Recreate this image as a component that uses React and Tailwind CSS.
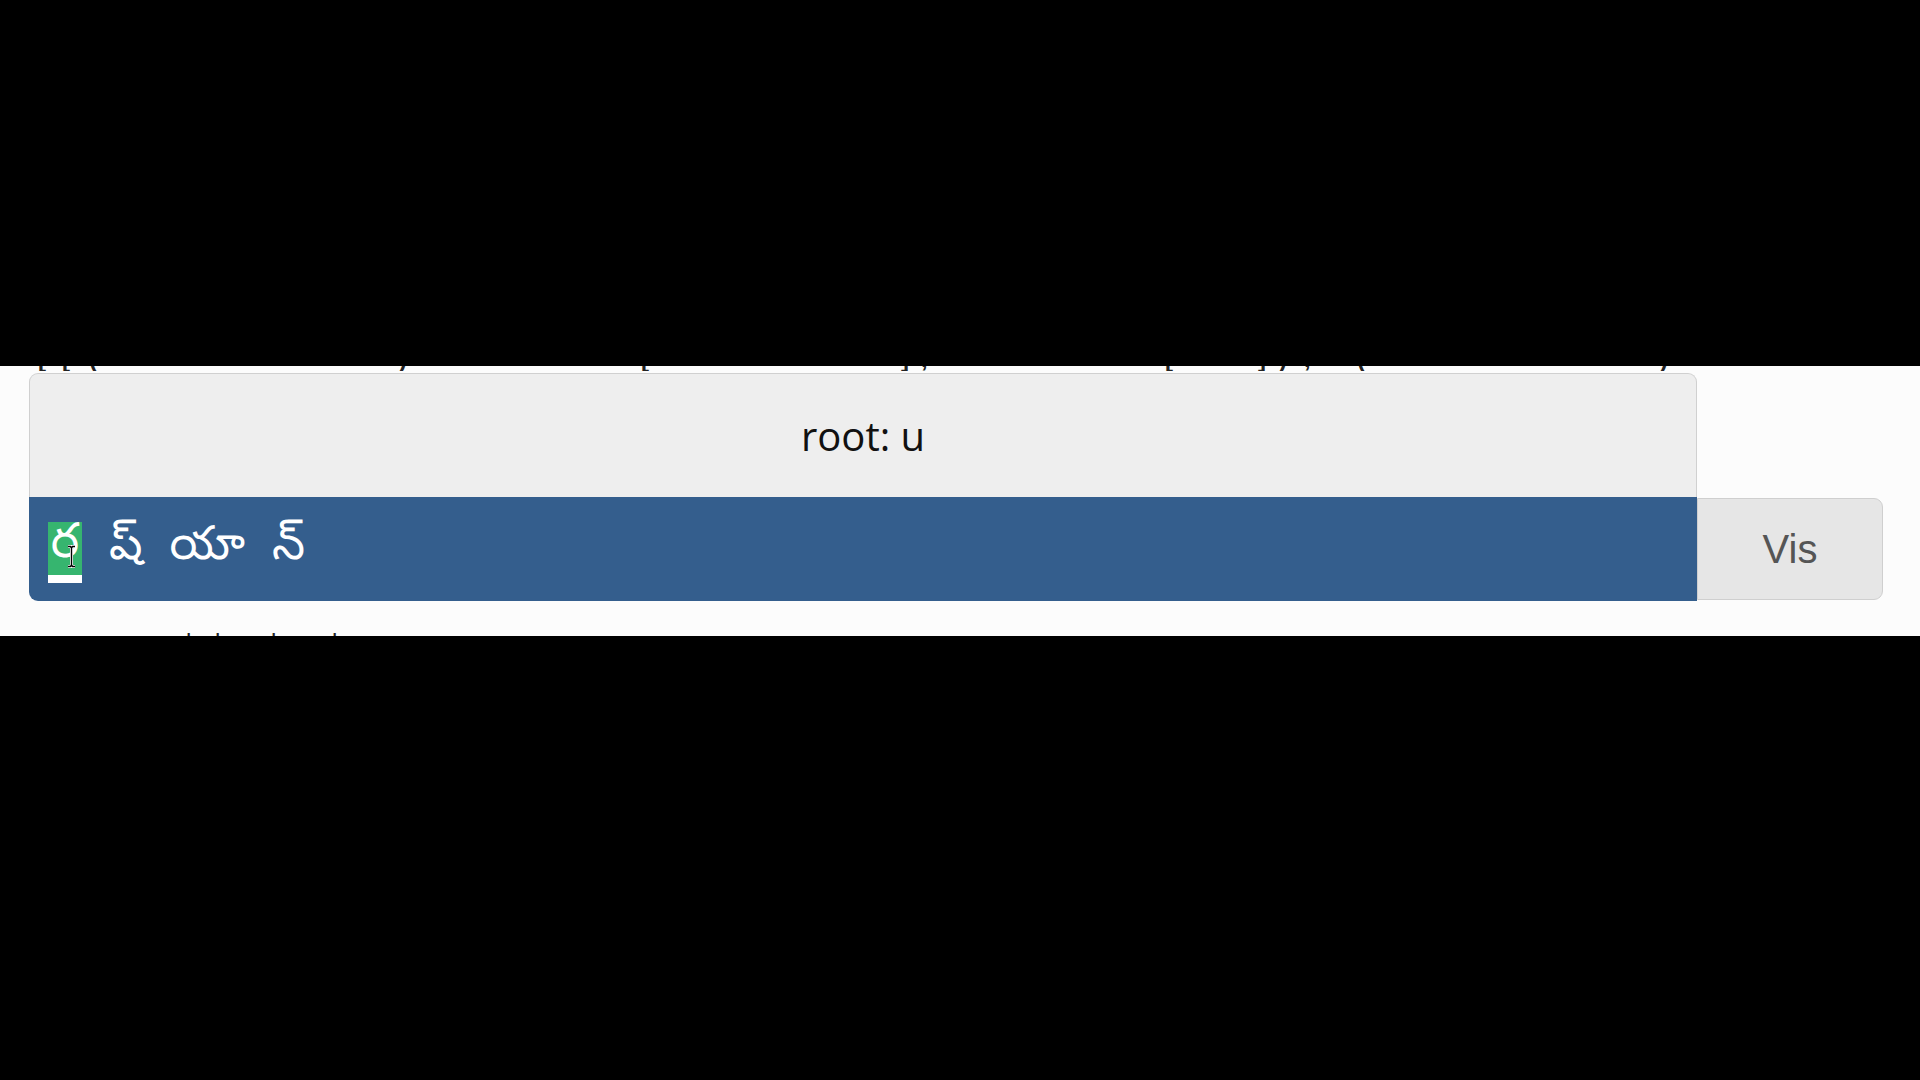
import React from "react";

const topFrags = [
  ["[", "w-[24px]"],
  ["[", "w-[27px]"],
  ["(", "w-[310px]"],
  [")", "w-[242px]"],
  ["[", "w-[260px]"],
  ["]", "w-[20px]"],
  [",", "w-[244px]"],
  ["[", "w-[93px]"],
  ["]", "w-[21px]"],
  [")", "w-[25px]"],
  [",", "w-[53px]"],
  ["(", "w-[303px]"],
  [")", "w-[20px]"],
];

const bottomFrags = [
  ["l", "w-[21px]"],
  ["d", "w-[64px]"],
  ["l", "w-[61px]"],
  ["k", "w-[20px]"],
];

const telugu = { fontFamily: '"Noto Sans Telugu", "Noto Sans", sans-serif' };

export default function App() {
  return (
    <div className="w-full h-[1080px] bg-black flex flex-col" style={{ fontFamily: '"Liberation Sans", Arial, sans-serif' }}>
      <div className="h-[366px] shrink-0" />
      <div className="h-[270px] shrink-0 bg-[#fcfcfc] flex flex-col overflow-hidden">
        {/* clipped line of text above */}
        <div className="h-[5px] overflow-hidden flex items-end pl-[38px] shrink-0">
          {topFrags.map(([c, w], i) => (
            <span key={i} className={`${w} shrink-0 text-[24px] leading-none text-[#222] font-bold`}>{c}</span>
          ))}
        </div>

        <div className="mt-[2px] ml-[29px] flex flex-col">
          <div className="w-[1668px] h-[124px] bg-[#eeeeee] border border-b-0 border-[#d0d0d0] rounded-t-[9px] flex items-center justify-center">
            <span className="text-[40px] text-[#111] leading-none" style={{ fontFamily: '"Open Sans", sans-serif' }}>root: u</span>
          </div>
          <div className="flex h-[104px]">
            <div className="w-[1668px] h-[104px] bg-[#345e8d] rounded-bl-[9px] flex items-center pl-[19px] pt-[6px] gap-[27px]">
              <span className="relative w-[34px] h-[61px] bg-[#36b56f] border-b-[8px] border-white flex items-center justify-center text-white text-[48px] leading-none overflow-visible" style={telugu}>
                ర
                <svg className="absolute left-[18px] top-[23px]" width="11" height="23" viewBox="0 0 11 23">
                  <path d="M2 1.5h2.5L5.5 3l1-1.5H9M5.5 3v17M2 21.5h2.5l1-1.5 1 1.5H9" fill="none" stroke="#fff" strokeWidth="3" />
                  <path d="M2 1.5h2.5L5.5 3l1-1.5H9M5.5 3v17M2 21.5h2.5l1-1.5 1 1.5H9" fill="none" stroke="#000" strokeWidth="1.4" />
                </svg>
              </span>
              <span className="text-white text-[47px] leading-none -mt-[3px]" style={telugu}>ష్</span>
              <span className="text-white text-[47px] leading-none -mt-[3px]" style={telugu}>యా</span>
              <span className="text-white text-[47px] leading-none -mt-[3px]" style={telugu}>న్</span>
            </div>
            <div className="w-[186px] h-[102px] mt-[1px] bg-[#e6e6e6] border border-[#cfcfcf] rounded-r-[9px] flex items-center justify-center">
              <span className="text-[40px] text-[#555] leading-none">Vis</span>
            </div>
          </div>
        </div>

        <div className="flex-1" />
        {/* clipped line of text below */}
        <div className="h-[3px] overflow-hidden flex items-start pl-[186px] shrink-0">
          {bottomFrags.map(([c, w], i) => (
            <span key={i} className={`${w} shrink-0 text-[24px] leading-[18px] text-[#222]`}>{c}</span>
          ))}
        </div>
      </div>
      <div className="flex-1" />
    </div>
  );
}
